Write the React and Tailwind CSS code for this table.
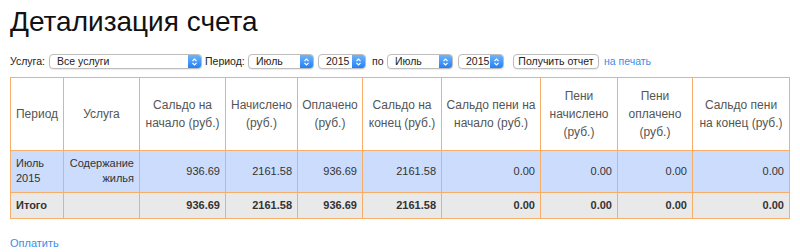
import React from "react";

// Column layout taken from the report table
const columns = [
  { title: "Период", width: "w-[53px]" },
  { title: "Услуга", width: "w-[76px]" },
  { title: "Сальдо на начало (руб.)", width: "w-[86px]" },
  { title: "Начислено (руб.)", width: "w-[72px]" },
  { title: "Оплачено (руб.)", width: "w-[65px]" },
  { title: "Сальдо на конец (руб.)", width: "w-[79px]" },
  { title: "Сальдо пени на начало (руб.)", width: "w-[99px]" },
  { title: "Пени начислено (руб.)", width: "w-[77px]" },
  { title: "Пени оплачено (руб.)", width: "w-[75px]" },
  { title: "Сальдо пени на конец (руб.)", width: "w-[97px]" },
];

const values = ["936.69", "2161.58", "936.69", "2161.58", "0.00", "0.00", "0.00", "0.00"];

const Chevrons = () => (
  <svg width="7" height="10" viewBox="0 0 7 10" fill="none">
    <path d="M1.5 4 L3.5 2 L5.5 4 M1.5 6 L3.5 8 L5.5 6" stroke="white" strokeWidth="1.1" />
  </svg>
);

const Select = ({ label, className }) => (
  <div
    className={`flex h-[15px] items-stretch rounded-[4px] border border-[#bdbdbd] bg-white shadow-[0_1px_1px_rgba(0,0,0,0.08)] ${className}`}
  >
    <span className="flex-1 truncate pl-[7px] text-[10.5px] leading-[13px] text-[#222]">{label}</span>
    <span className="flex w-[13px] items-center justify-center rounded-r-[3px] bg-gradient-to-b from-[#6db4fb] to-[#1f80f5]">
      <Chevrons />
    </span>
  </div>
);

const cellBorder = "border border-[#f7ae69]";

export default function App() {
  return (
    <div className="min-h-[252px] bg-white px-[10px] font-['Liberation_Sans',Arial,sans-serif] text-[#333]">
      <h1 className="pt-[6px] text-[28px] leading-[32px] text-[#111]">Детализация счета</h1>

      <div className="mt-[16px] flex items-center text-[10.5px] text-[#222]">
        <span className="w-[39px]">Услуга:</span>
        <Select label="Все услуги" className="w-[153px]" />
        <span className="ml-[3px] w-[43px]">Период:</span>
        <Select label="Июль" className="w-[66px]" />
        <Select label="2015" className="ml-[4px] w-[48px]" />
        <span className="ml-[6px] w-[15px]">по</span>
        <Select label="Июль" className="w-[66px]" />
        <Select label="2015" className="ml-[5px] w-[46px]" />
        <button className="ml-[9px] h-[15px] w-[86px] rounded-[4px] border border-[#bdbdbd] bg-white text-[10.5px] leading-[13px] text-[#222] shadow-[0_1px_1px_rgba(0,0,0,0.08)]">
          Получить отчет
        </button>
        <a className="ml-[5px] text-[#3a8ee6]" href="#">
          на печать
        </a>
      </div>

      <table className="mt-[7px] w-[780px] table-fixed border-collapse">
        <colgroup>
          {columns.map((c) => (
            <col key={c.title} className={c.width} />
          ))}
        </colgroup>
        <thead>
          <tr className="h-[73px] bg-white">
            {columns.map((c) => (
              <th key={c.title} className={`${cellBorder} px-[4px] text-center text-[12px] font-normal leading-[18px] text-[#555]`}>
                {c.title}
              </th>
            ))}
          </tr>
        </thead>
        <tbody className="text-[11px] leading-[15px]">
          <tr className="h-[42px] bg-[#ccdcfc]">
            <td className={`${cellBorder} px-[5px] text-left`}>Июль 2015</td>
            <td className={`${cellBorder} px-[5px] text-right`}>Содержание жилья</td>
            {values.map((v, i) => (
              <td key={i} className={`${cellBorder} px-[5px] text-right`}>
                {v}
              </td>
            ))}
          </tr>
          <tr className="h-[26px] bg-[#e9e9e9] font-bold">
            <td className={`${cellBorder} px-[5px] text-left`}>Итого</td>
            <td className={cellBorder}></td>
            {values.map((v, i) => (
              <td key={i} className={`${cellBorder} px-[5px] text-right`}>
                {v}
              </td>
            ))}
          </tr>
        </tbody>
      </table>

      <a className="mt-[16px] block text-[11px] text-[#3a8ee6]" href="#">
        Оплатить
      </a>
    </div>
  );
}
